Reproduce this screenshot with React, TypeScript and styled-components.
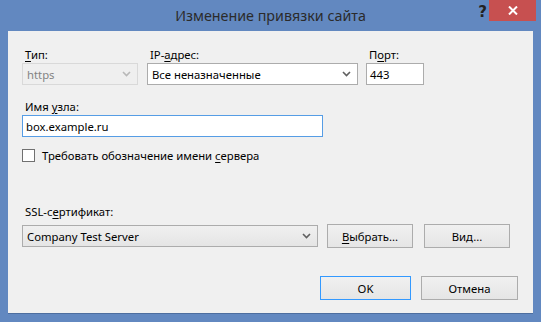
import React from 'react';
import styled, { createGlobalStyle } from 'styled-components';

const frameBlue = '#6288c0';
const faceGrey = '#f0f0f0';
const borderGrey = '#acacac';
const uiFont = '"Noto Sans", "Open Sans", sans-serif';
const uiSize = '11.3px';

const GlobalStyle = createGlobalStyle`
  html, body {
    margin: 0;
    padding: 0;
    background: ${frameBlue};
  }
  * {
    box-sizing: border-box;
  }
`;

const Chevron: React.FC<{ muted?: boolean }> = ({ muted }) => (
  <svg width="9" height="6" viewBox="0 0 9 6">
    <polyline
      points="1,1 4.5,4.5 8,1"
      fill="none"
      stroke={muted ? '#b8b8b8' : '#606060'}
      strokeWidth="1.6"
    />
  </svg>
);

const App: React.FC = () => {
  return (
    <>
      <GlobalStyle />
      <Window>
        <TitleBar>
          <Title>Изменение привязки сайта</Title>
          <HelpGlyph>?</HelpGlyph>
          <CloseButton>
            <svg width="10" height="9" viewBox="0 0 10 9">
              <path d="M1 0.5 L9 8.5 M9 0.5 L1 8.5" stroke="#fff" strokeWidth="2" />
            </svg>
          </CloseButton>
        </TitleBar>
        <Client>
          <TopRow>
            <Field width={116}>
              <Label><u>Т</u>ип:</Label>
              <Combo disabled>
                <span>https</span>
                <Chevron muted />
              </Combo>
            </Field>
            <Field width={211}>
              <Label>IP-<u>а</u>дрес:</Label>
              <Combo white>
                <span>Все неназначенные</span>
                <Chevron />
              </Combo>
            </Field>
            <Field width={58}>
              <Label>П<u>о</u>рт:</Label>
              <TextBox>443</TextBox>
            </Field>
          </TopRow>

          <HostField width={301}>
            <Label>Имя <u>у</u>зла:</Label>
            <TextBox focused>box.example.ru</TextBox>
          </HostField>

          <CheckRow>
            <CheckBox />
            <CheckText>Требовать обозначение имени <u>с</u>ервера</CheckText>
          </CheckRow>

          <CertBlock>
            <Label>SSL-с<u>е</u>ртификат:</Label>
            <CertRow>
              <Combo style={{ width: 296 }}>
                <span>Company Test Server</span>
                <Chevron />
              </Combo>
              <Button width={86}><u>В</u>ыбрать...</Button>
              <Button width={86}>Вид...</Button>
            </CertRow>
          </CertBlock>

          <ActionRow>
            <Button width={91} primary>OK</Button>
            <Button width={97}>Отмена</Button>
          </ActionRow>
        </Client>
      </Window>
    </>
  );
};

const Window = styled.div`
  width: 541px;
  height: 322px;
  background: ${frameBlue};
  display: flex;
  flex-direction: column;
  padding: 0 8px 8px 8px;
  font-family: ${uiFont};
`;

const TitleBar = styled.div`
  position: relative;
  height: 31px;
  flex: none;
  display: flex;
  align-items: center;
  justify-content: center;
`;

const Title = styled.div`
  font-family: ${uiFont};
  font-size: 14.3px;
  color: #2b2b2b;
  margin-top: -1px;
`;

const HelpGlyph = styled.div`
  position: absolute;
  right: 46px;
  top: 3px;
  font-family: "DejaVu Sans", sans-serif;
  font-weight: bold;
  font-size: 15px;
  color: #222;
`;

const CloseButton = styled.div`
  position: absolute;
  right: -3px;
  top: 0;
  width: 47px;
  height: 21px;
  background: #c75050;
  display: flex;
  align-items: center;
  justify-content: center;
`;

const Client = styled.div`
  flex: 1;
  background: ${faceGrey};
  border-bottom: 1px solid #4d6e9f;
  padding: 16px 0 0 14px;
  display: flex;
  flex-direction: column;
  font-size: ${uiSize};
  color: #000;
`;

const TopRow = styled.div`
  display: flex;
  gap: 9px;
  & > :last-child {
    margin-left: -1px;
  }
`;

const Field = styled.div<{ width: number }>`
  width: ${(p) => p.width}px;
  display: flex;
  flex-direction: column;
`;

const HostField = styled(Field)`
  margin-top: 14px;
`;

const Label = styled.div`
  height: 16px;
  line-height: 15px;
  padding-left: 3px;
  white-space: nowrap;
  u {
    text-decoration-thickness: 1px;
    text-underline-offset: 2px;
  }
`;

const Combo = styled.div<{ disabled?: boolean; white?: boolean }>`
  height: 22px;
  border: 1px solid ${(p) => (p.disabled ? '#d9d9d9' : borderGrey)};
  background: ${(p) =>
    p.disabled
      ? '#efefef'
      : p.white
      ? '#fff'
      : 'linear-gradient(#f0f0f0, #e5e5e5)'};
  color: ${(p) => (p.disabled ? '#838383' : '#000')};
  display: flex;
  align-items: center;
  justify-content: space-between;
  padding: 0 6px 0 4px;
  white-space: nowrap;
`;

const TextBox = styled.div<{ focused?: boolean }>`
  height: 22px;
  border: 1px solid ${(p) => (p.focused ? '#569de5' : borderGrey)};
  background: #fff;
  display: flex;
  align-items: center;
  padding: 0 3px;
`;

const CheckRow = styled.div`
  margin-top: 10px;
  height: 17px;
  display: flex;
  align-items: center;
  gap: 7px;
`;

const CheckBox = styled.div`
  width: 13px;
  height: 13px;
  border: 1px solid #707070;
  background: #fff;
`;

const CheckText = styled.span`
  u {
    text-underline-offset: 2px;
  }
`;

const CertBlock = styled.div`
  margin-top: 40px;
  display: flex;
  flex-direction: column;
  & > ${Label} {
    height: 20px;
  }
`;

const CertRow = styled.div`
  display: flex;
  align-items: center;
  gap: 9px;
  & > :last-child {
    margin-left: 2px;
  }
`;

const Button = styled.div<{ width: number; primary?: boolean }>`
  width: ${(p) => p.width}px;
  height: 24px;
  border: 1px solid ${(p) => (p.primary ? '#3399ff' : borderGrey)};
  background: linear-gradient(#f0f0f0, #e5e5e5);
  display: flex;
  align-items: center;
  justify-content: center;
  u {
    text-underline-offset: 2px;
  }
`;

const ActionRow = styled.div`
  margin-top: 28px;
  display: flex;
  gap: 10px;
  padding-left: 298px;
`;

export default App;
